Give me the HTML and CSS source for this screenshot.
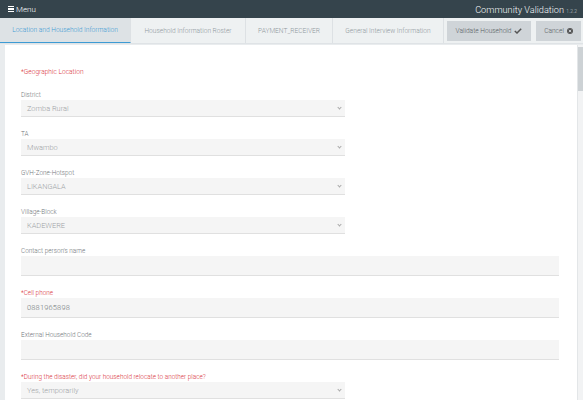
FILE: index.html
```html
<!DOCTYPE html>
<html>
<head>
<meta charset="utf-8">
<link rel="stylesheet" href="styles.css">
</head>
<body>
<div class="topbar">
  <div class="menu"><span class="burger"><i></i><i></i><i></i></span>Menu</div>
  <div class="title">Community Validation <span class="ver">1.2.2</span></div>
</div>
<div class="tabs">
  <div class="tab active">Location and Household Information</div>
  <div class="tab">Household Information Roster</div>
  <div class="tab">PAYMENT_RECEIVER</div>
  <div class="tab">General Interview Information</div>
  <div class="btn validate">Validate Household <svg width="8" height="6" viewBox="0 0 8 6"><path d="M0.8 3 L3 5 L7.2 0.8" fill="none" stroke="#555" stroke-width="1.5"/></svg></div>
  <div class="btn cancel">Cancel <svg width="6" height="6" viewBox="0 0 6 6"><circle cx="3" cy="3" r="3" fill="#555"/><path d="M1.8 1.8 L4.2 4.2 M4.2 1.8 L1.8 4.2" stroke="#cfd4d8" stroke-width="0.9"/></svg></div>
</div>
<div class="page">
  <div class="card">
    <div class="section req">*Geographic Location</div>
    <div class="field">
      <div class="label">District</div>
      <div class="select">Zomba Rural<span class="chev"></span></div>
    </div>
    <div class="field">
      <div class="label">TA</div>
      <div class="select">Mwambo<span class="chev"></span></div>
    </div>
    <div class="field">
      <div class="label">GVH-Zone-Hotspot</div>
      <div class="select">LIKANGALA<span class="chev"></span></div>
    </div>
    <div class="field">
      <div class="label">Village-Block</div>
      <div class="select">KADEWERE<span class="chev"></span></div>
    </div>
    <div class="field">
      <div class="label">Contact person's name</div>
      <div class="input"></div>
    </div>
    <div class="field">
      <div class="label req">*Cell phone</div>
      <div class="input value">0881965898</div>
    </div>
    <div class="field">
      <div class="label">External Household Code</div>
      <div class="input"></div>
    </div>
    <div class="field">
      <div class="label req">*During the disaster, did your household relocate to another place?</div>
      <div class="select">Yes, temporarily<span class="chev"></span></div>
    </div>
  </div>
  <div class="scroll"><div class="thumb"></div></div>
</div>
</body>
</html>
```
FILE: styles.css
```css
* { box-sizing: border-box; }
html, body { margin: 0; padding: 0; }
body {
  width: 583px;
  height: 400px;
  overflow: hidden;
  font-family: Roboto, "Liberation Sans", sans-serif;
  font-weight: 300;
  background: #e9ecee;
}
.topbar {
  height: 18px;
  background: #35444c;
  color: #fff;
  display: flex;
  align-items: center;
  justify-content: space-between;
  padding: 0 6px 0 8px;
}
.menu {
  font-size: 8px;
  font-weight: 300;
  display: flex;
  align-items: center;
  gap: 2px;
}
.burger {
  display: flex;
  flex-direction: column;
  gap: 1px;
  width: 6px;
}
.burger i {
  display: block;
  height: 1.2px;
  background: #fff;
}
.title {
  font-size: 9.2px;
  font-weight: 300;
  color: #f4f6f7;
}
.ver {
  font-size: 5px;
  color: #bfc7cb;
}
.tabs {
  height: 26px;
  background: #eef1f2;
  display: flex;
  align-items: stretch;
  border-bottom: 1px solid #dfe3e6;
}
.tab {
  font-size: 6.6px;
  color: #8f989d;
  display: flex;
  align-items: center;
  justify-content: center;
  border-right: 1px solid #dde1e4;
}
.tab:nth-child(1) { width: 131px; }
.tab:nth-child(2) { width: 115px; }
.tab:nth-child(3) { width: 87px; }
.tab:nth-child(4) { width: 111px; }
.tab.active {
  background: #dde2e5;
  color: #3d9bd4;
  border-bottom: 1.5px solid #3d9bd4;
}
.btn {
  font-size: 6.6px;
  font-weight: 300;
  color: #555c60;
  background: #cfd4d8;
  display: flex;
  align-items: center;
  gap: 3px;
  justify-content: center;
  margin: 3px 0 2px;
}
.validate { width: 84px; margin-left: 3px; }
.cancel { width: 45px; margin-left: 5px; }
.page {
  display: flex;
  padding: 1px 0 0 5px;
  height: 356px;
}
.card {
  flex: 1;
  background: #fff;
  padding: 23px 18px 0 16px;
  overflow: hidden;
}
.scroll {
  width: 6px;
  background: #f2f3f4;
  border-left: 1px solid #e3e6e8;
}
.thumb {
  height: 44px;
  background: #cdd2d5;
  margin-top: 2px;
}
.section {
  font-size: 6.6px;
  font-weight: 300;
  height: 9px;
  line-height: 9px;
  margin-bottom: 15px;
}
.req { color: #d9343c; }
.label {
  font-size: 6.4px;
  color: #6f7579;
  height: 7px;
  line-height: 7px;
  margin-bottom: 1px;
}
.label.req { color: #d9343c; }
.field { margin-bottom: 14px; }
.select, .input {
  background: #f5f5f5;
  border-bottom: 1.2px solid #e0e0e0;
  font-size: 7.4px;
  color: #9ea3a6;
  display: flex;
  align-items: center;
  padding: 0 6px;
  position: relative;
}
.select { width: 324px; height: 17px; }
.input { height: 20px; }
.input.value { color: #6f7579; font-size: 7.4px; letter-spacing: 0.2px; }
.chev {
  position: absolute;
  right: 4px;
  top: 6px;
  width: 3px;
  height: 3px;
  border-right: 1px solid #aaa;
  border-bottom: 1px solid #aaa;
  transform: rotate(45deg);
}
```
